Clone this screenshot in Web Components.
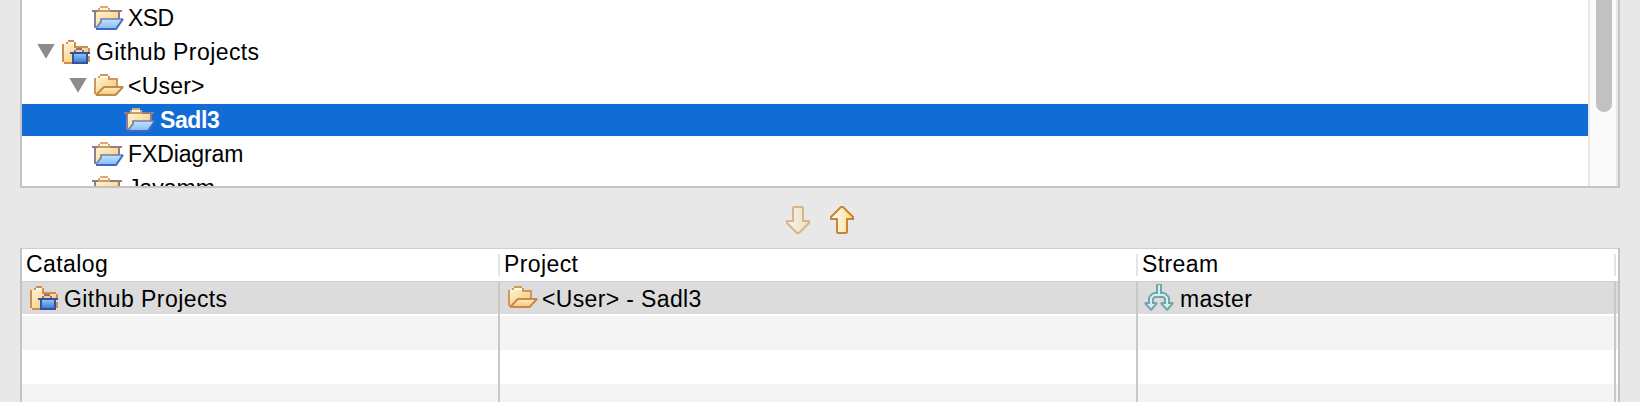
<!DOCTYPE html>
<html lang="en"><head><meta charset="utf-8"><title>Catalog streams</title>
<style>
html,body{margin:0;height:402px;overflow:hidden;background:#e8e8e8}
body{font:23px/34px "Liberation Sans",Arial,sans-serif;color:#000}
</style></head><body>
<stream-dialog></stream-dialog>
<script>
const ICONS={
folder:`<path d="M4 10H28V18H12L4 27Z" fill="url(#g)"/><path d="M8 6H16V8H8Z" fill="#fff8dd"/><path d="M8 4H16V6H18V8H16V6H8V8H6V6H8Z" fill="#d6aa78"/><path d="M0 8H6V8H18V8H30V10H28V18H26V10H4V12H2V10H0Z" fill="#967c80"/><path d="M6 8H18V10H6Z" fill="#c89b6c"/><path d="M2 12H4V26H2Z" fill="#8f7d9d"/><g shape-rendering="auto"><path d="M12 17H31L24 27H4Z" fill="url(#b)"/><path d="M4 26L9 20V17H31" fill="none" stroke="#6c7db4" stroke-width="1.7"/><path d="M31 17L24 27H4" fill="none" stroke="#4068c4" stroke-width="2"/></g>`,
open:`<path d="M4 8H24V18H12L4 25Z" fill="url(#g)"/><path d="M8 6H16V8H8Z" fill="#fffbea"/><path d="M8 4H16V6H8ZM6 6H8V8H6ZM16 6H18V8H26V16H24V10H16ZM2 8H4V24H2Z" fill="#ce975c"/><path d="M12 17H31L23.5 25H4Z" fill="url(#o)" stroke="#c48a4a" stroke-width="2" shape-rendering="auto" stroke-linejoin="bevel"/>`,
catalog:`<path d="M4 8H14V12H28V26H4Z" fill="url(#g)"/><path d="M8 6H14V8H8Z" fill="#fff9e6"/><path d="M8 4H14V6H8ZM6 6H8V8H6ZM14 6H16V10H28V12H30V16H28V12H14ZM2 8H4V26H2ZM4 26H12V28H4ZM28 20H30V26H28Z" fill="#cb9051"/><path d="M16 14H22V16H16Z" fill="#f1cba4"/><path d="M16 12H22V14H24V16H22V14H16V16H14V14H16Z" fill="#967078"/><path d="M10 16H30V18H28V28H12V18H10Z" fill="#35539c"/><path d="M14 18H26V26H14Z" fill="url(#k)"/>`,
stream:`<g fill="none" stroke-linejoin="bevel" shape-rendering="auto"><path d="M15 2V14M7 23V16L10 13H20L23 16V23" stroke="#79a3a7" stroke-width="6"/><path d="M1 21H13L7 28ZM17 21H29L23 28Z" fill="#c9f3f3" stroke="#79a3a7" stroke-width="2"/><path d="M15 3V14M7 24V16L10 13H20L23 16V24" stroke="#c9f3f3" stroke-width="2"/></g>`
};
const DEFS=`<defs><linearGradient id="g" x2="1" y2="1"><stop stop-color="#fff4cf"/><stop offset="1" stop-color="#f4c26c"/></linearGradient><linearGradient id="o" x2="0" y2="1"><stop stop-color="#fff0c8"/><stop offset="1" stop-color="#f6c675"/></linearGradient><linearGradient id="b" x2="0" y2="1"><stop stop-color="#c2e4fb"/><stop offset="1" stop-color="#86b9f0"/></linearGradient><linearGradient id="k" x2="0" y2="1"><stop stop-color="#8cc4f2"/><stop offset="1" stop-color="#3f7fd4"/></linearGradient></defs>`;
function define(name,render){
  customElements.define(name,class extends HTMLElement{
    connectedCallback(){ if(!this.shadowRoot) this.attachShadow({mode:'open'}).innerHTML=render(this); }
  });
}
define('tree-icon',e=>`<style>:host{display:block;flex:none;width:32px;height:32px}svg{display:block}</style><svg width="32" height="32" shape-rendering="crispEdges">${DEFS}${ICONS[e.getAttribute('name')]}</svg>`);
define('icon-label',e=>`<style>:host{display:flex;gap:4px;height:34px;white-space:nowrap}span{letter-spacing:${e.getAttribute('tracking')||0}px;height:34px}</style><tree-icon name="${e.getAttribute('icon')}"></tree-icon><span><slot></slot></span>`);
define('tree-row',e=>`<style>
:host{display:flex;flex:none;height:32px;line-height:32px;margin-bottom:2px;padding-left:${14+32*e.getAttribute('level')}px}
:host([selected]){background:#116cd6;color:#fff;font-weight:bold}
svg{display:block;width:24px;height:32px;flex:none}
</style><svg>${e.hasAttribute('expanded')?'<path d="M1.3 8H18.7L10 22.7Z" fill="#8c8c8c"/>':''}</svg>
<icon-label icon="${e.getAttribute('icon')}" tracking="${e.getAttribute('tracking')}"><slot></slot></icon-label>`);
define('scroll-bar',()=>`<style>:host{display:flex;justify-content:center;box-sizing:border-box;width:30px;height:186px;background:#fafafa;border:solid #e8e8e8;border-width:0 2px}i{width:16px;height:112px;border-radius:0 0 8px 8px;background:#c1c1c1;margin-right:-2px}</style><i></i>`);
define('catalog-tree',()=>`<style>:host{display:flex;box-sizing:border-box;height:188px;margin:0 20px;border:solid #c4c4c4;border-width:0 2px 2px;background:#fff;overflow:hidden}main{flex:1;display:flex;flex-direction:column;padding-top:2px;height:184px;overflow:hidden}</style><main><slot></slot></main><scroll-bar></scroll-bar>`);
define('arrow-button',e=>`<style>:host{display:block;width:24px;height:28px}:host([disabled]){opacity:.5}:host([up]) svg{transform:scaleY(-1)}svg{display:block}</style><svg width="24" height="28"><defs><linearGradient id="a"><stop stop-color="#fff"/><stop offset="1" stop-color="#fbd98a"/></linearGradient></defs><path d="M7 2L8 1H16L17 2V15H23V17L13 27H11L1 17V15H7Z" fill="url(#a)" stroke="#c58531" stroke-width="2"/></svg>`);
define('table-column',e=>`<style>
:host{display:block;position:relative;height:154px}
header{height:33px;box-sizing:border-box;padding-left:4px;line-height:33px;letter-spacing:.4px;display:flex}
header span{flex:1}
header i{width:2px;height:22px;margin-top:6px;background:#e4e4e4}
section{display:flex;justify-content:space-between;height:120px;padding-top:1px}
section i{width:2px;background:#c8c8c8}
::slotted(*){margin-left:6px}
</style><header><span>${e.getAttribute('heading')}</span><i></i></header><section><slot></slot><i></i></section>`);
define('stream-table',()=>`<style>:host{display:grid;grid-template-columns:478px 638px 478px 2px;box-sizing:border-box;height:154px;margin:0 20px;border:solid #c4c4c4;border-width:0 2px;overflow:hidden;
background:linear-gradient(#cfcfcf 1px,#fff 1px 33px,#d0d0d0 33px 34px,#dcdcdc 34px 66px,#fff 66px 68px,#f4f4f4 68px 102px,#fff 102px 136px,#f4f4f4 136px)}</style><slot></slot>`);
define('stream-dialog',()=>`<style>:host{display:block}nav{display:flex;gap:20px;justify-content:center;height:60px;padding-top:18px;box-sizing:border-box}</style>
<catalog-tree>
<tree-row level="1" icon="folder" tracking="-.6">XSD</tree-row>
<tree-row level="0" icon="catalog" tracking=".42" expanded>Github Projects</tree-row>
<tree-row level="1" icon="open" tracking=".2" expanded>&lt;User&gt;</tree-row>
<tree-row level="2" icon="folder" tracking="-.4" selected>Sadl3</tree-row>
<tree-row level="1" icon="folder" tracking="-.12">FXDiagram</tree-row>
<tree-row level="1" icon="folder" tracking="0">Javamm</tree-row>
</catalog-tree>
<nav><arrow-button disabled></arrow-button><arrow-button up></arrow-button></nav>
<stream-table>
<table-column heading="Catalog"><icon-label icon="catalog" tracking=".42">Github Projects</icon-label></table-column>
<table-column heading="Project"><icon-label icon="open" tracking=".36">&lt;User&gt; - Sadl3</icon-label></table-column>
<table-column heading="Stream"><icon-label icon="stream" tracking=".3">master</icon-label></table-column>
</stream-table>`);
</script></body></html>
